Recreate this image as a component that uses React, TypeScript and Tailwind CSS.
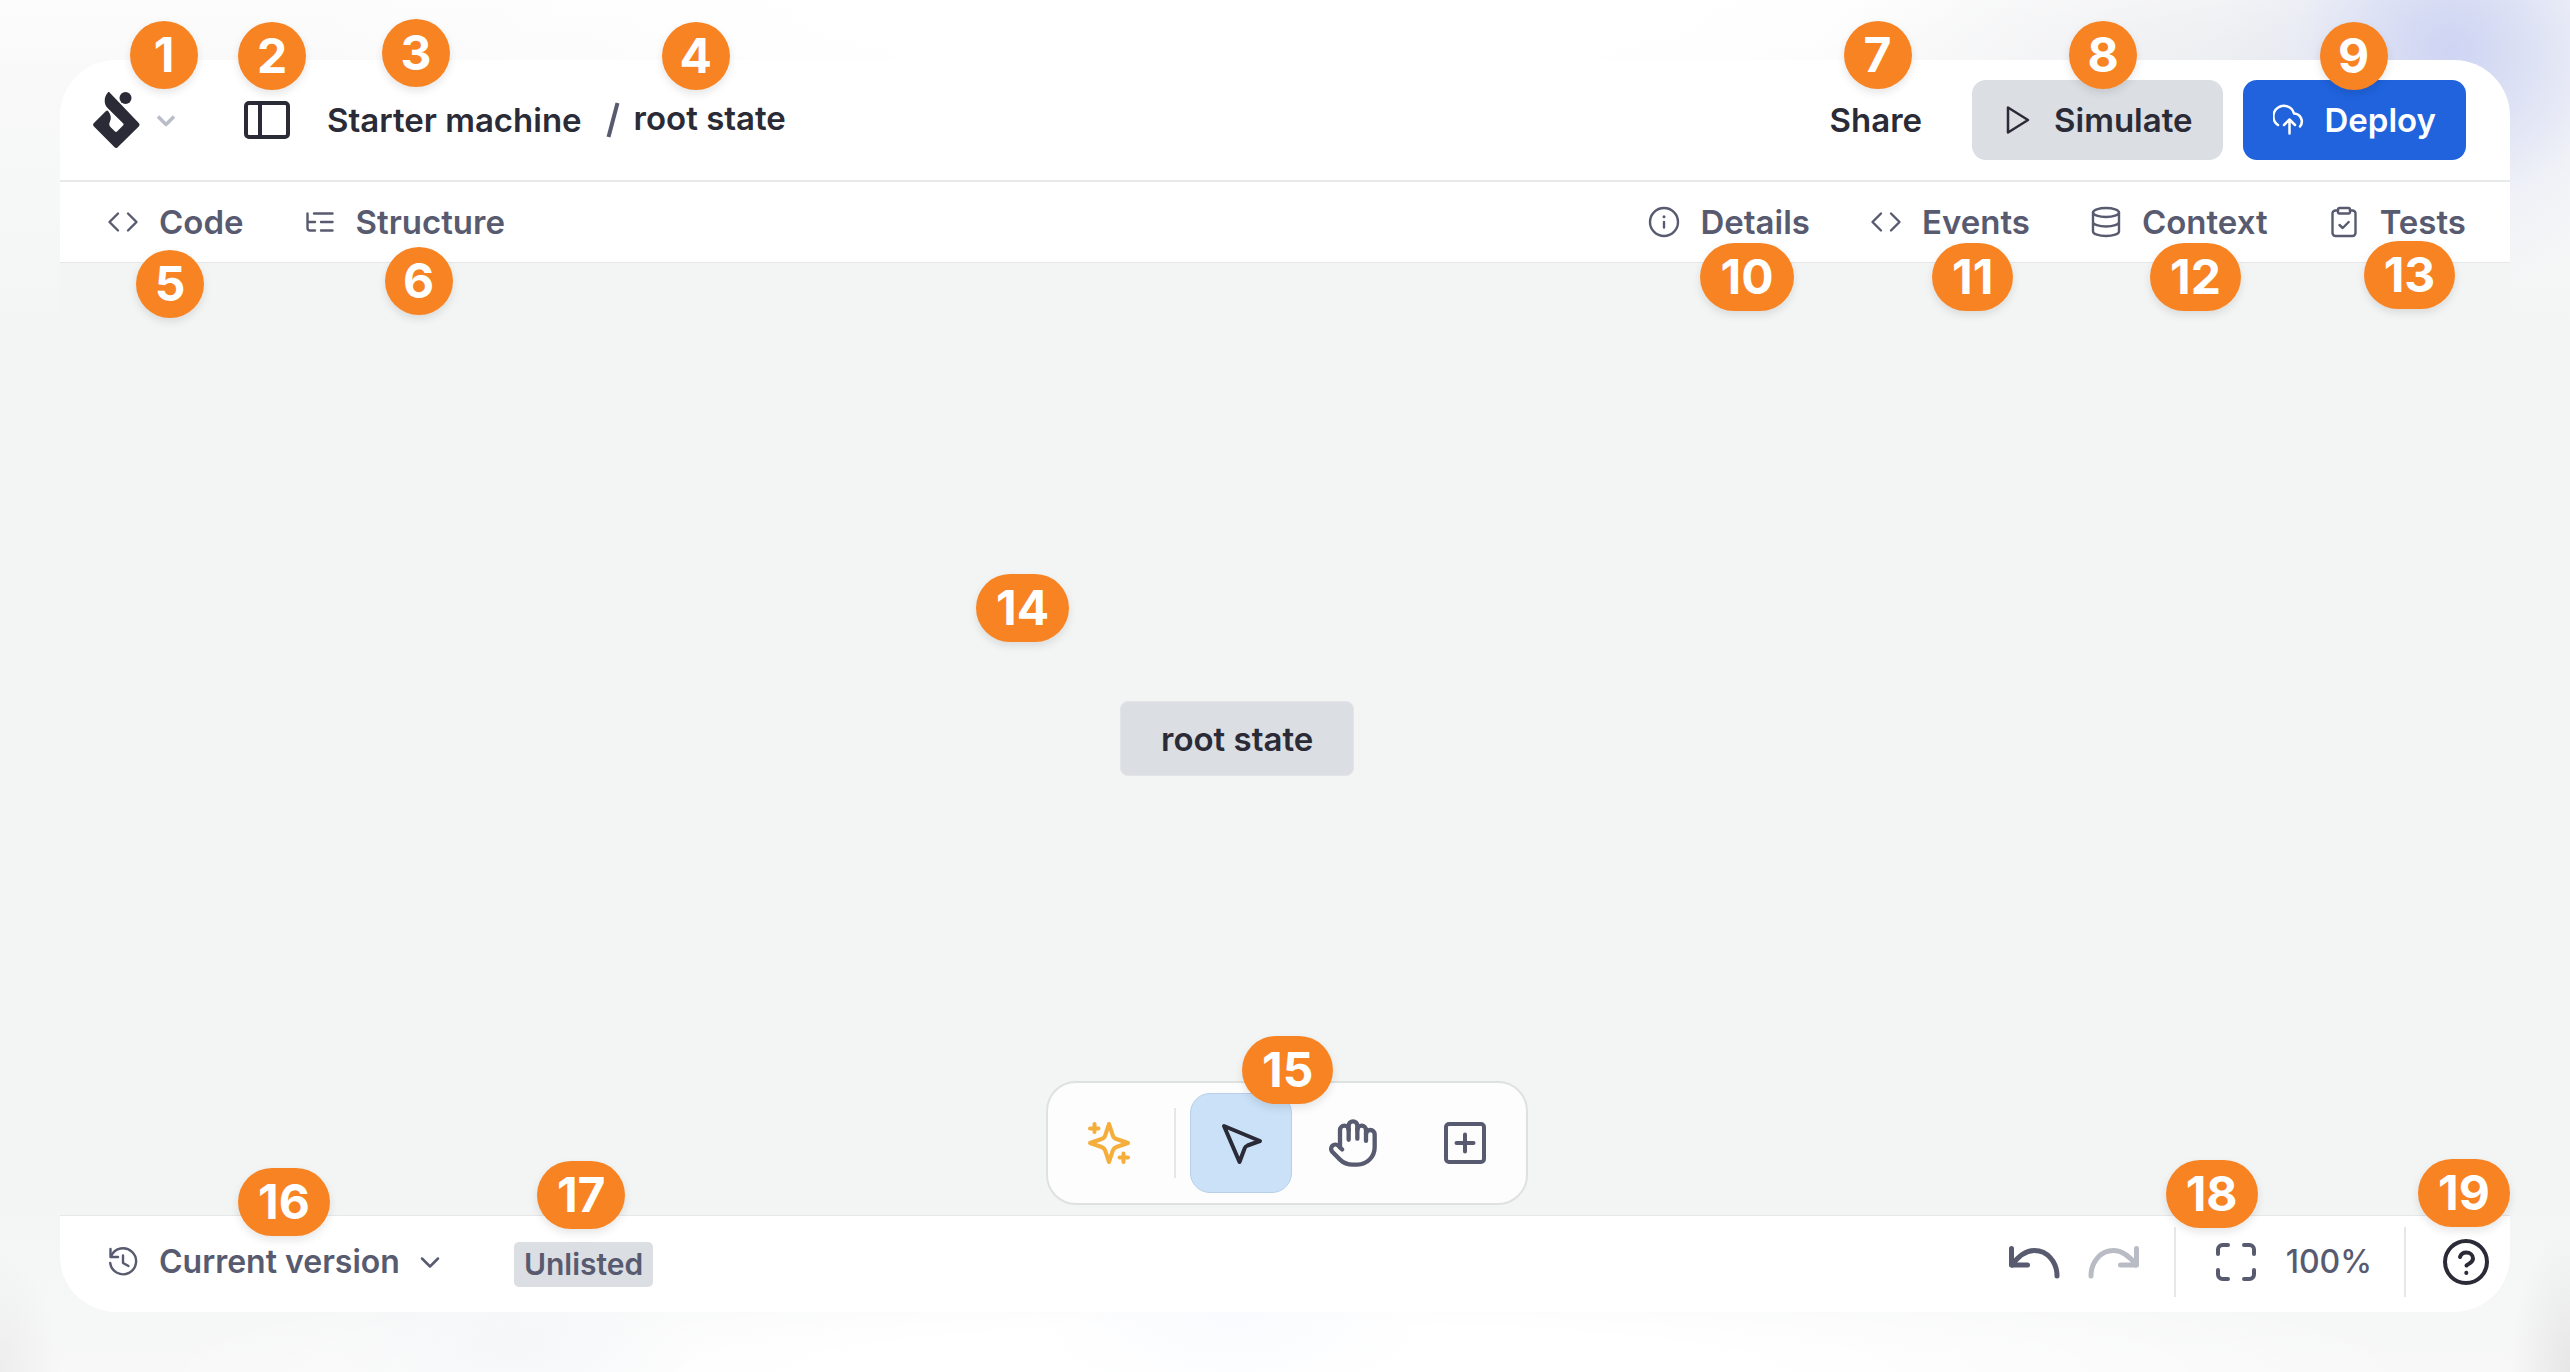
import React from "react";

type IconProps = { className?: string; children: React.ReactNode; size?: number; width?: number };

function Icon({ className = "", children, size = 32, width = 2.4 }: IconProps) {
  return (
    <svg
      width={size}
      height={size}
      viewBox={`0 0 ${size} ${size}`}
      fill="none"
      stroke="currentColor"
      strokeWidth={width}
      strokeLinecap="round"
      strokeLinejoin="round"
      aria-hidden="true"
      className={`shrink-0 ${className}`}
    >
      {children}
    </svg>
  );
}

function Logo() {
  return (
    <svg width="48" height="58" viewBox="0 0 48 58" fill="#2a2b36" aria-hidden="true" className="shrink-0">
      <circle cx="33.500" cy="7" r="6" />
      <path d="M15.900 1.500c.5-.6 1.100-.6 1.700 0L46.500 31.700c1.400 1.500 1.400 2.500 0 4L26.200 55.700c-1.500 1.600-2.600 1.600-4.100 0L2.200 35.700c-1.500-1.500-1.500-2.500 0-4L14 20c.8-.8 1.500-.8 2.100 0 3 3.500 3.400 7.300 1.800 10.800-1 2.300-.8 3.900.8 5.400l4.300 4.400c.6.600 1.400.6 2 0l6-6c.8-.8.8-1.500 0-2.300L15.800 17.200C13.500 14.900 12.700 12.500 12.700 9.700c0-3.300 1.200-5.900 3.200-8.200z" />
    </svg>
  );
}

const PanelIcon = () => (
  <Icon size={48} width={4}>
    <rect x="3" y="7" width="42" height="34" rx="3" />
    <path d="M17 7v34" />
  </Icon>
);
const CodeIcon = () => (
  <Icon>
    <path d="M11 7.500 2.500 16l8.500 8.500M21 7.500 29.500 16 21 24.500" />
  </Icon>
);
const TreeIcon = () => (
  <Icon>
    <path d="M10 7.500h18.500M17 16h11.500M17 24.500h11.500M3.500 7.500V22a2.500 2.500 0 0 0 2.500 2.500h5M3.500 16H11" />
  </Icon>
);
const InfoIcon = () => (
  <Icon>
    <circle cx="16" cy="16" r="14" />
    <path d="M16 16v5.500" />
    <path d="M16 10.700v.1" strokeWidth="3" />
  </Icon>
);
const DatabaseIcon = () => (
  <Icon>
    <ellipse cx="16" cy="6.500" rx="13" ry="4.500" />
    <path d="M3 6.500v19c0 2.500 5.800 4.500 13 4.500s13-2 13-4.500v-19M3 16c0 2.500 5.800 4.500 13 4.500S29 18.500 29 16" />
  </Icon>
);
const ClipboardIcon = () => (
  <Icon>
    <path d="M10 4.500H7.500a3 3 0 0 0-3 3v19.500a3 3 0 0 0 3 3h17a3 3 0 0 0 3-3V7.500a3 3 0 0 0-3-3H22" />
    <rect x="10" y="2" width="12" height="5.500" rx="1.500" />
    <path d="m11.500 19 3.200 3 6-6" />
  </Icon>
);
const PlayIcon = () => (
  <Icon width={2.500}>
    <path d="M6 3.500v25L26 16z" />
  </Icon>
);
const CloudIcon = () => (
  <Icon width={2.500}>
    <path d="M5 21A10.500 10.500 0 1 1 21 9.500 8 8 0 0 1 27 22.500" />
    <path d="M16.500 29.500V16M11 21l5.500-5.500 5.500 5.500" />
  </Icon>
);
const HistoryIcon = () => (
  <Icon>
    <path d="M3.500 3v8H11" />
    <path d="M4.200 10A13 13 0 1 1 3.200 17" />
    <path d="M16 9.500V17l5.500 3" />
  </Icon>
);
const UndoIcon = ({ flip = false }: { flip?: boolean }) => (
  <Icon size={56} width={5} className={flip ? "-scale-x-100 text-[#b9bcc4]" : ""}>
    <path d="M5.500 14.500V31h16" />
    <path d="M6 31C14 20 21 16.500 28.500 16.500 41 16.500 51 27.500 51 42" />
  </Icon>
);
const ScanIcon = () => (
  <Icon size={48} width={4}>
    <path d="M6 16V11.500A4.500 4.500 0 0 1 10.500 7H16M32 7h5.500A4.500 4.500 0 0 1 42 11.500V16M42 32v4.500a4.500 4.500 0 0 1-4.500 4.500H32M16 41h-5.500A4.500 4.500 0 0 1 6 36.500V32" />
  </Icon>
);
const HelpIcon = () => (
  <Icon size={48} width={4}>
    <circle cx="24" cy="24" r="21" />
    <path d="M18 19c1-3 3.500-4.500 6.300-4.500 3.600 0 6.700 2.400 6.700 6 0 4-4.500 5-6.500 7" />
    <path d="M24.300 34.800v.2" />
  </Icon>
);
const SparklesIcon = () => (
  <Icon size={48} width={4}>
    <path d="M24 5l3.800 11.500c.6 1.700 1.900 3 3.600 3.500L43 24l-11.600 4c-1.700.6-3 1.900-3.600 3.500L24 43l-3.800-11.500c-.6-1.600-1.900-2.900-3.600-3.500L5 24l11.600-4c1.700-.5 3-1.800 3.600-3.500z" />
    <path d="M9.500 5v8M5 9.500h8.500M38.500 34.500v8.500M34.500 38.500H43" />
  </Icon>
);
const CursorIcon = () => (
  <Icon size={48} width={4}>
    <path d="M7 7 43 22 30.500 26.500c-1.500.6-2.500 1.700-3 3.200L22.500 43z" />
  </Icon>
);
const HandIcon = () => (
  <svg width="52" height="52" viewBox="0 0 24 24" fill="none" stroke="currentColor" strokeWidth="2" strokeLinecap="round" strokeLinejoin="round" aria-hidden="true">
    <path d="M18 11V6a2 2 0 0 0-2-2a2 2 0 0 0-2 2" />
    <path d="M14 10V4a2 2 0 0 0-2-2a2 2 0 0 0-2 2v2" />
    <path d="M10 10.500V6a2 2 0 0 0-2-2a2 2 0 0 0-2 2v8" />
    <path d="M18 8a2 2 0 1 1 4 0v6a8 8 0 0 1-8 8h-2c-2.800 0-4.500-.86-5.990-2.340l-3.600-3.600a2 2 0 0 1 2.830-2.820L7 15" />
  </svg>
);
const PlusIcon = () => (
  <Icon size={48} width={4}>
    <rect x="5" y="5" width="38" height="38" rx="3" />
    <path d="M24 15.500v17M15.500 24h17" />
  </Icon>
);

function Badge({ n, at }: { n: number; at: string }) {
  return (
    <span
      className={`absolute z-20 flex h-[68px] min-w-[68px] items-center justify-center rounded-full bg-[#f88323] text-[48px] leading-none font-bold text-white shadow-[0_4px_8px_rgba(0,0,0,0.1)] ${n > 9 ? "px-5" : ""} ${at}`}
    >
      {n}
    </span>
  );
}

function Tab({ icon, label, n, at }: { icon: React.ReactNode; label: string; n: number; at: string }) {
  return (
    <button type="button" className="relative flex items-center gap-5">
      {icon}
      {label}
      <Badge n={n} at={at} />
    </button>
  );
}

export default function App() {
  return (
    <div
      className="flex min-h-screen flex-col bg-[#f4f6f6] px-[60px] py-[60px] text-[33px] leading-10 font-semibold text-[#585b6f]"
      style={{
        fontFamily: "Inter, sans-serif",
        backgroundImage: [
          "radial-gradient(ellipse 240px 240px at calc(100% - 120px) 50px, rgba(206,212,243,1), rgba(213,219,244,.8) 30%, rgba(228,232,247,.4) 65%, rgba(240,242,248,0))",
          "radial-gradient(ellipse 480px 140px at calc(100% - 280px) 60px, rgba(236,237,240,1), rgba(246,246,247,0))",
          "radial-gradient(ellipse 1000px 200px at 1250px 0px, #ffffff 40%, rgba(255,255,255,0))",
          "radial-gradient(ellipse 180px 90px at 20% 98%, rgba(245,247,249,1), rgba(248,249,250,0))",
          "radial-gradient(ellipse 200px 90px at 48% 96%, rgba(250,251,254,1), rgba(252,252,253,0))",
          "radial-gradient(ellipse 60px 120px at 0% 100%, rgba(236,236,236,.9), rgba(244,244,244,0))",
          "radial-gradient(ellipse 60px 140px at 100% 100%, rgba(228,228,228,.9), rgba(242,242,242,0))",
          "radial-gradient(ellipse 1150px 120px at 50% 100%, rgba(255,255,255,1) 40%, rgba(255,255,255,0))",
          "linear-gradient(#fcfcfc, #f9f9f9 80px, #f3f5f5 340px, #f3f5f5 1200px, #f8f8f8)",
        ].join(","),
      }}
    >
      <div className="flex grow flex-col">
        <header className="flex h-[120px] items-center rounded-t-[56px] bg-white pr-11 pl-8 text-[#2a2b36]">
          <button type="button" aria-label="Editor menu" className="relative flex items-center gap-4">
            <Logo />
            <Icon size={20} width={3.500} className="text-[#b9bdc9]">
              <path d="m2 6.500 8 8 8-8" strokeLinecap="butt" />
            </Icon>
            <Badge n={1} at="left-[38px] top-[-70px]" />
          </button>
          <button type="button" aria-label="Toggle left panel" className="relative ml-[67px]">
            <PanelIcon />
            <Badge n={2} at="left-[-5px] top-[-74px]" />
          </button>
          <a href="#machine" className="relative ml-9">
            Starter machine
            <Badge n={3} at="left-[55px] top-[-81px]" />
          </a>
          <svg width="14" height="38" viewBox="0 0 14 38" className="ml-6 shrink-0 text-[#585b6f]" aria-hidden="true">
            <path d="M2.500 36 11.500 2" stroke="currentColor" strokeWidth="4" />
          </svg>
          <a href="#root" className="relative mb-1 ml-[14px]">
            root state
            <Badge n={4} at="left-[28px] top-[-76px]" />
          </a>
          <div className="ml-auto flex items-center">
            <button type="button" className="relative mr-[50px]">
              Share
              <Badge n={7} at="left-[14px] top-[-79px]" />
            </button>
            <button type="button" className="relative mr-5 flex h-20 items-center gap-5 rounded-[14px] bg-[#dbdee3] px-[30px]">
              <PlayIcon />
              Simulate
              <Badge n={8} at="left-[97px] top-[-59px]" />
            </button>
            <button type="button" className="relative flex h-20 items-center gap-5 rounded-[14px] bg-[#2063dd] px-[30px] text-white">
              <CloudIcon />
              Deploy
              <Badge n={9} at="left-[77px] top-[-58px]" />
            </button>
          </div>
        </header>

        <nav aria-label="Panels" className="flex h-[83px] items-center justify-between border-t-2 border-b border-t-[#e8e9ea] border-b-[#e6e7e8] bg-white pr-11 pl-[47px]">
          <div className="flex gap-[60px]">
            <Tab icon={<CodeIcon />} label="Code" n={5} at="left-[29px] top-[48px]" />
            <Tab icon={<TreeIcon />} label="Structure" n={6} at="left-[81px] top-[45px]" />
          </div>
          <div className="flex gap-[60px]">
            <Tab icon={<InfoIcon />} label="Details" n={10} at="left-[52px] top-[41px]" />
            <Tab icon={<CodeIcon />} label="Events" n={11} at="left-[62px] top-[41px]" />
            <Tab icon={<DatabaseIcon />} label="Context" n={12} at="left-[60px] top-[41px]" />
            <Tab icon={<ClipboardIcon />} label="Tests" n={13} at="left-[36px] top-[39px]" />
          </div>
        </nav>

        <main className="relative flex grow flex-col items-center justify-end bg-[#f3f5f4] pb-[10px] pl-1">
          <Badge n={14} at="left-[916px] top-[311px]" />
          <button
            type="button"
            className="absolute top-[438px] left-[1060px] flex h-[75px] items-center rounded-lg border border-[#e2e4e8] bg-[#dbdee3] px-10 text-[#2a2b36]"
          >
            root state
          </button>
          <div role="toolbar" aria-label="Canvas tools" className="relative flex items-center gap-[10px] rounded-[30px] border-2 border-[#dfe1e1] bg-[#fdfdfd] p-[10px]">
            <button type="button" aria-label="Generate" className="flex h-[100px] w-[102px] items-center justify-center text-[#f5ae3b]">
              <SparklesIcon />
            </button>
            <span className="mx-1 h-[70px] w-[2px] bg-[#e6e7e8]" />
            <button type="button" aria-label="Select" aria-pressed="true" className="flex h-[100px] w-[102px] items-center justify-center rounded-[20px] border border-[#b7d0e8] bg-[#cae1f7] text-[#2a2b36]">
              <CursorIcon />
            </button>
            <button type="button" aria-label="Pan" className="flex h-[100px] w-[102px] items-center justify-center">
              <HandIcon />
            </button>
            <button type="button" aria-label="Add state" className="flex h-[100px] w-[102px] items-center justify-center">
              <PlusIcon />
            </button>
            <Badge n={15} at="left-[194px] top-[-47px]" />
          </div>
        </main>

        <footer className="flex h-[97px] items-center rounded-b-[56px] border-t border-[#e6e7e8] bg-white pr-[20px] pb-1 pl-[47px] text-[32px]">
          <button type="button" className="relative flex items-center gap-5">
            <HistoryIcon />
            Current version
            <Icon size={20} width={2.500}>
              <path d="m2 6.500 8 8 8-8" />
            </Icon>
            <Badge n={16} at="left-[131px] top-[-74px]" />
          </button>
          <span className="relative mt-1 ml-[74px] rounded-[5px] bg-[#dbdee3] px-[10px] text-[30px] leading-[45px]">
            Unlisted
            <Badge n={17} at="left-[23px] top-[-81px]" />
          </span>
          <div className="ml-auto flex items-center">
            <button type="button" aria-label="Undo"><UndoIcon /></button>
            <button type="button" aria-label="Redo" className="ml-6"><UndoIcon flip /></button>
            <span className="ml-8 h-[70px] w-[2px] bg-[#e6e7e8]" />
            <button type="button" aria-label="Fit to view" className="relative ml-9">
              <ScanIcon />
              <Badge n={18} at="left-[-46px] top-[-78px]" />
            </button>
            <button type="button" className="ml-[26px] font-medium">100%</button>
            <span className="ml-8 h-[70px] w-[2px] bg-[#e6e7e8]" />
            <button type="button" aria-label="Help" className="relative ml-9 text-[#2a2b36]">
              <HelpIcon />
              <Badge n={19} at="left-[-24px] top-[-79px]" />
            </button>
          </div>
        </footer>
      </div>
    </div>
  );
}
